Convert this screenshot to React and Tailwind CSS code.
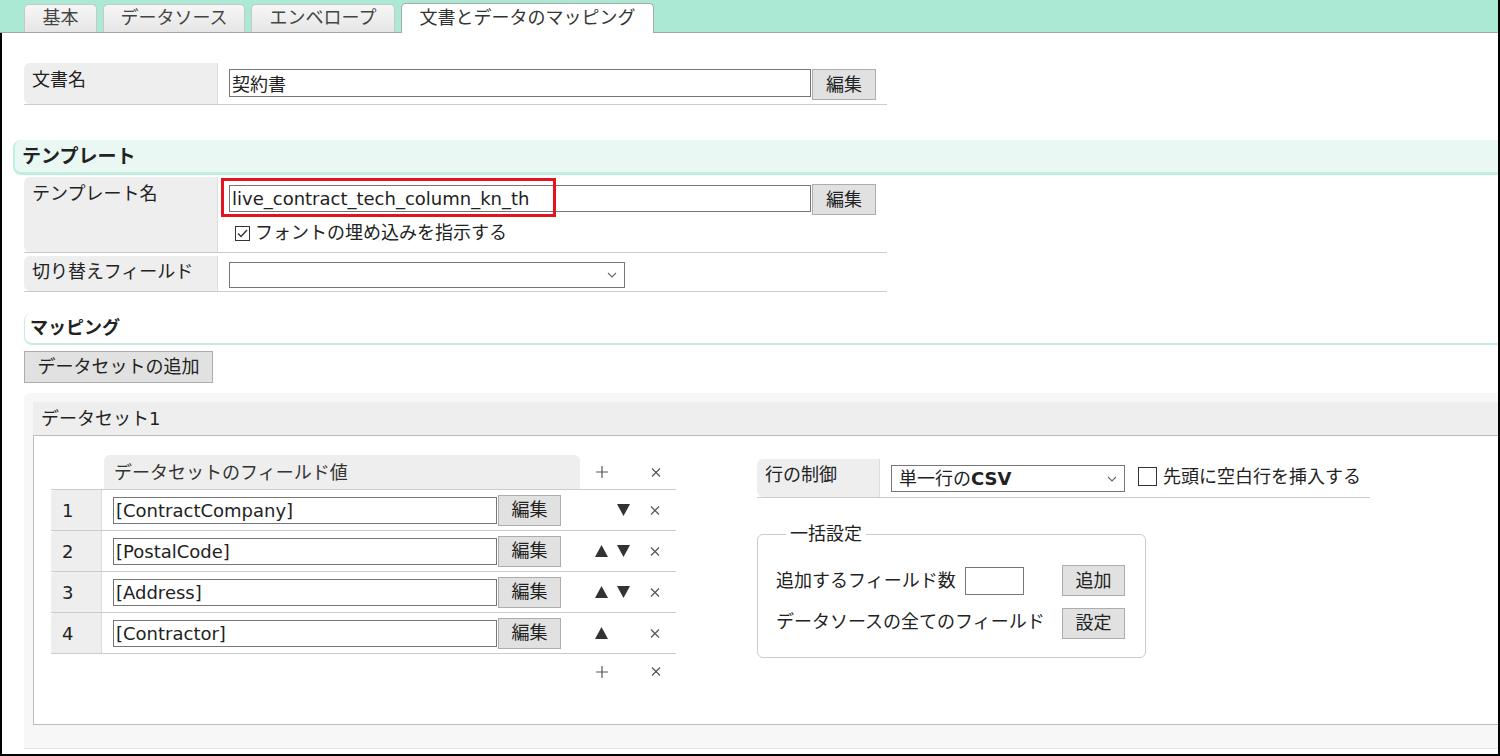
import React from 'react';

const Btn = ({ children, className = '' }) => (
  <button className={`h-[31px] bg-[#e1e1e1] border border-[#adadad] text-[18px] leading-none text-[#222] shrink-0 ${className}`}>
    {children}
  </button>
);

const Chevron = () => (
  <svg width="10" height="6" viewBox="0 0 10 6" className="shrink-0">
    <path d="M1 1 L5 5 L9 1" fill="none" stroke="#666" strokeWidth="1.1" />
  </svg>
);

const Up = () => (
  <svg width="13" height="12" viewBox="0 0 13 12">
    <polygon points="0,12 6.5,0 13,12" fill="#333" />
  </svg>
);

const Down = () => (
  <svg width="13" height="12" viewBox="0 0 13 12">
    <polygon points="0,0 13,0 6.5,12" fill="#333" />
  </svg>
);

const Cross = () => (
  <svg width="10" height="9" viewBox="0 0 10 9">
    <path d="M1 0.5 L9 8.5 M9 0.5 L1 8.5" stroke="#555" strokeWidth="1.2" />
  </svg>
);

const Plus = () => (
  <svg width="12" height="12" viewBox="0 0 12 12">
    <path d="M6 0 V12 M0 6 H12" stroke="#555" strokeWidth="1.2" />
  </svg>
);

const tabs = [
  { label: '基本', w: 'w-[73px]' },
  { label: 'データソース', w: 'w-[142px]' },
  { label: 'エンベロープ', w: 'w-[144px]' },
];

const fields = [
  { n: 1, v: '[ContractCompany]', up: false, down: true },
  { n: 2, v: '[PostalCode]', up: true, down: true },
  { n: 3, v: '[Address]', up: true, down: true },
  { n: 4, v: '[Contractor]', up: true, down: false },
];

function FieldRow({ f }) {
  return (
    <div className="flex items-center h-[41px] border-t border-[#ccc]">
      <div className="w-[51px] h-full bg-[#eee] rounded-tl-[4px] border-r border-[#ddd] pl-[11px] flex items-center">
        {f.n}
      </div>
      <div className="pl-[11px] flex items-center">
        <input
          readOnly
          defaultValue={f.v}
          className="w-[384px] h-[27px] border border-[#767676] bg-white px-[2px] text-[18px] text-[#222] outline-none"
        />
        <Btn className="w-[63px] ml-[1px]">編集</Btn>
      </div>
      <div className="w-[29px]" />
      <div className="w-[22px] flex justify-center">{f.up && <Up />}</div>
      <div className="w-[22px] flex justify-center">{f.down && <Down />}</div>
      <div className="w-[10px]" />
      <div className="w-[22px] flex justify-center"><Cross /></div>
    </div>
  );
}

export default function App() {
  return (
    <div className="w-[1500px] h-[756px] overflow-hidden bg-white flex flex-col border-r-2 border-b-2 border-black text-[18px] text-[#222] font-['DejaVu_Sans','Noto_Sans_CJK_JP',sans-serif]">
      {/* Tabs */}
      <div className="h-[33px] shrink-0 bg-[#abe9d5] border-b border-[#a5a5a5] flex items-end pl-[24px] gap-[6px]">
        {tabs.map((t) => (
          <div
            key={t.label}
            className={`${t.w} h-[28px] rounded-t-[5px] border border-b-0 border-[#c8c8c8] bg-gradient-to-b from-[#f6f6f6] to-[#e6e6e6] text-[#444] text-[18px] leading-[26px] text-center`}
          >
            {t.label}
          </div>
        ))}
        <div className="w-[253px] h-[30px] rounded-t-[5px] border border-b-0 border-[#aaa] bg-white text-[#333] text-[18px] leading-[28px] text-center translate-y-[1px]">
          文書とデータのマッピング
        </div>
      </div>

      {/* Content */}
      <div className="flex-1 flex flex-col border-l-2 border-black pl-[11px]">
        {/* 文書名 */}
        <div className="ml-[11px] mt-[30px] w-[863px] flex border-b border-[#ccc]">
          <div className="w-[194px] h-[41px] bg-[#eee] rounded-l-[6px] border-r border-[#ddd] pl-[8px] pt-[5px] leading-[24px]">
            文書名
          </div>
          <div className="pl-[11px] pt-[6px] flex items-start">
            <input
              readOnly
              defaultValue="契約書"
              className="w-[582px] h-[28px] border border-[#767676] bg-white px-[2px] text-[18px] text-[#222] outline-none"
            />
            <Btn className="w-[64px] ml-[1px]">編集</Btn>
          </div>
        </div>

        {/* テンプレート header */}
        <div className="mt-[35px] h-[35px] bg-[#eaf8f3] border-l-2 border-b-[3px] border-[#c0eedf] rounded-l-[8px] pl-[7px] flex items-center">
          <span className="font-bold text-[19px] leading-none text-[#222]">テンプレート</span>
        </div>

        {/* テンプレート名 */}
        <div className="ml-[11px] mt-[2px] w-[863px] flex border-b border-[#ccc]">
          <div className="w-[194px] h-[75px] bg-[#eee] rounded-l-[6px] border-r border-[#ddd] pl-[8px] pt-[5px] leading-[24px]">
            テンプレート名
          </div>
          <div className="relative pl-[11px] pt-[7px] flex flex-col">
            <div className="flex items-start">
              <input
                readOnly
                defaultValue="live_contract_tech_column_kn_th"
                className="w-[582px] h-[27px] mt-[1px] border border-[#767676] bg-white px-[2px] text-[18px] text-[#222] outline-none"
              />
              <Btn className="w-[64px] ml-[1px] h-[30px]">編集</Btn>
            </div>
            <div className="flex items-center mt-[6px] pl-[6px]">
              <div className="w-[15px] h-[15px] border border-[#333] bg-white flex items-center justify-center">
                <svg width="11" height="9" viewBox="0 0 11 9">
                  <path d="M1 4.5 L4 7.5 L10 1" fill="none" stroke="#333" strokeWidth="1.4" />
                </svg>
              </div>
              <span className="ml-[5px] leading-[24px]">フォントの埋め込みを指示する</span>
            </div>
            <div className="absolute left-[3px] top-[1px] w-[335px] h-[39px] border-[3px] border-[#e3141d]" />
          </div>
        </div>

        {/* 切り替えフィールド */}
        <div className="ml-[11px] mt-[3px] w-[863px] flex border-b border-[#ccc]">
          <div className="w-[194px] h-[35px] bg-[#eee] rounded-l-[6px] border-r border-[#ddd] pl-[8px] pt-[4px] leading-[24px]">
            切り替えフィールド
          </div>
          <div className="pl-[11px] pt-[6px]">
            <div className="w-[396px] h-[26px] border border-[#767676] bg-white flex items-center justify-end pr-[7px]">
              <Chevron />
            </div>
          </div>
        </div>

        {/* マッピング header */}
        <div className="ml-[11px] mt-[21px] h-[32px] border-l border-b-2 border-[#c0eedf] rounded-l-[8px] pl-[5px] flex items-center">
          <span className="font-bold text-[18px] leading-none text-[#222]">マッピング</span>
        </div>

        <div className="ml-[11px] mt-[6px]">
          <Btn className="w-[189px] h-[32px]">データセットの追加</Btn>
        </div>

        {/* Dataset panel */}
        <div className="ml-[11px] mt-[10px] h-[356px] bg-[#f7f7f7] rounded-tl-[6px] border-b border-[#e6e6e6] pt-[9px] pl-[9px] flex flex-col">
          <div className="h-[34px] bg-[#eee] border-b border-[#bbb] pl-[8px] flex items-center leading-none">
            データセット1
          </div>
          <div className="h-[289px] bg-white border-l border-b border-[#bbb] pl-[17px] pt-[19px] flex items-start">
            {/* Field table */}
            <div className="w-[625px] flex flex-col">
              <div className="flex items-center h-[34px]">
                <div className="w-[53px]" />
                <div className="w-[476px] h-full bg-[#eee] rounded-t-[6px] pl-[10px] flex items-center text-[#333]">
                  データセットのフィールド値
                </div>
                <div className="w-[11px]" />
                <div className="w-[22px] flex justify-center"><Plus /></div>
                <div className="w-[22px]" />
                <div className="w-[10px]" />
                <div className="w-[22px] flex justify-center"><Cross /></div>
              </div>
              {fields.map((f) => (
                <FieldRow key={f.n} f={f} />
              ))}
              <div className="flex items-center h-[36px] border-t border-[#ccc]">
                <div className="w-[540px]" />
                <div className="w-[22px] flex justify-center"><Plus /></div>
                <div className="w-[32px]" />
                <div className="w-[22px] flex justify-center"><Cross /></div>
              </div>
            </div>

            {/* Right side */}
            <div className="ml-[81px] mt-[4px] flex flex-col">
              <div className="w-[613px] flex items-start border-b border-[#ccc]">
                <div className="w-[123px] h-[38px] bg-[#eee] rounded-l-[6px] border-r border-[#ddd] pl-[8px] pt-[4px] leading-[24px]">
                  行の制御
                </div>
                <div className="ml-[11px] mt-[6px] w-[234px] h-[27px] border border-[#767676] bg-white flex items-center pl-[7px] pr-[7px]">
                  <span className="flex-1">単一行の<span className="font-semibold">CSV</span></span>
                  <Chevron />
                </div>
                <div className="ml-[13px] mt-[8px] w-[19px] h-[19px] border border-[#333] bg-white" />
                <span className="ml-[6px] mt-[6px] leading-[24px]">先頭に空白行を挿入する</span>
              </div>

              <fieldset className="mt-[24px] w-[389px] border border-[#ccc] rounded-[6px] pl-[18px] pb-[19px]">
                <legend className="ml-[10px] px-[4px] leading-[24px]">一括設定</legend>
                <div className="mt-[19px] flex items-center h-[31px]">
                  <span className="w-[189px]">追加するフィールド数</span>
                  <div className="w-[59px] h-[28px] border border-[#767676] bg-white" />
                  <div className="w-[38px]" />
                  <Btn className="w-[63px] h-[30px]">追加</Btn>
                </div>
                <div className="mt-[12px] flex items-center h-[30px]">
                  <span className="w-[286px] -mt-[4px]">データソースの全てのフィールド</span>
                  <Btn className="w-[63px] h-[30px]">設定</Btn>
                </div>
              </fieldset>
            </div>
          </div>
        </div>
      </div>
    </div>
  );
}
